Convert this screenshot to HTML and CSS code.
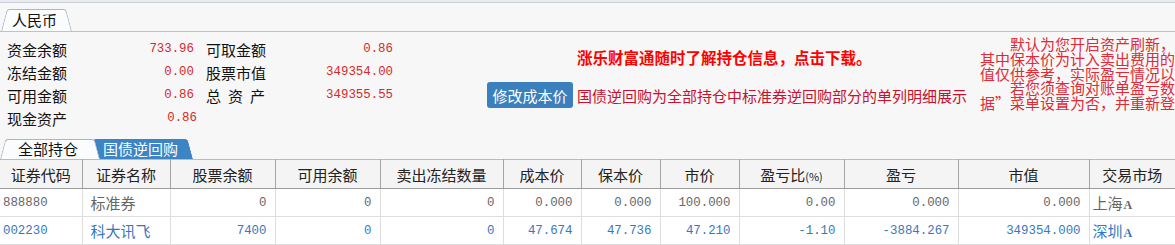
FILE: index.html
```html
<!DOCTYPE html>
<html lang="zh-CN">
<head>
  <meta charset="UTF-8">
  <title>资金持仓</title>
  <link rel="stylesheet" href="styles.css">
</head>
<body>
  <div class="topbar"></div>
  <div class="tabstrip">
    <div class="tab tab-money">人民币</div>
  </div>

  <div class="summary">
    <div class="funds">
      <span class="lbl">资金余额</span><span class="num">733.96</span>
      <span class="lbl lbl2">可取金额</span><span class="num">0.86</span>
      <span class="lbl">冻结金额</span><span class="num">0.00</span>
      <span class="lbl lbl2">股票市值</span><span class="num">349354.00</span>
      <span class="lbl">可用金额</span><span class="num">0.86</span>
      <span class="lbl lbl2 spaced">总资产</span><span class="num">349355.55</span>
      <span class="lbl">现金资产</span><span class="num num-shift">0.86</span>
    </div>

    <div class="notice">
      <p class="promo">涨乐财富通随时了解持仓信息，点击下载。</p>
      <div class="notice-row">
        <button class="btn">修改成本价</button>
        <span class="hint">国债逆回购为全部持仓中标准券逆回购部分的单列明细展示</span>
      </div>
    </div>

    <!-- 右侧提示文字，超出部分被裁掉 -->
    <div class="tips">
      <p class="ind">默认为您开启资产刷新，若</p>
      <p>其中保本价为计入卖出费用的成</p>
      <p>值仅供参考，实际盈亏情况以对</p>
      <p class="ind">若您须查询对账单盈亏数据</p>
      <p>据”菜单设置为否，并重新登录</p>
    </div>
  </div>

  <div class="tabstrip tabstrip-pos">
    <div class="tab tab-all">全部持仓</div>
    <div class="tab tab-active">国债逆回购</div>
  </div>

  <table class="grid">
    <colgroup>
      <col style="width:82px"><col style="width:88px"><col style="width:105px"><col style="width:105px">
      <col style="width:123px"><col style="width:78px"><col style="width:79px"><col style="width:79px">
      <col style="width:105px"><col style="width:114px"><col style="width:131px"><col style="width:86px">
    </colgroup>
    <thead>
      <tr>
        <th>证券代码</th>
        <th>证券名称</th>
        <th>股票余额</th>
        <th>可用余额</th>
        <th>卖出冻结数量</th>
        <th>成本价</th>
        <th>保本价</th>
        <th>市价</th>
        <th>盈亏比<span class="pct">(%)</span></th>
        <th>盈亏</th>
        <th>市值</th>
        <th>交易市场</th>
      </tr>
    </thead>
    <tbody>
      <tr class="row-gray">
        <td class="code">888880</td>
        <td class="name">标准券</td>
        <td class="n">0</td>
        <td class="n">0</td>
        <td class="n">0</td>
        <td class="n">0.000</td>
        <td class="n">0.000</td>
        <td class="n">100.000</td>
        <td class="n">0.00</td>
        <td class="n">0.000</td>
        <td class="n">0.000</td>
        <td class="mkt">上海<b>A</b></td>
      </tr>
      <tr class="row-blue">
        <td class="code">002230</td>
        <td class="name">科大讯飞</td>
        <td class="n">7400</td>
        <td class="n">0</td>
        <td class="n">0</td>
        <td class="n">47.674</td>
        <td class="n">47.736</td>
        <td class="n">47.210</td>
        <td class="n">-1.10</td>
        <td class="n">-3884.267</td>
        <td class="n">349354.000</td>
        <td class="mkt">深圳<b>A</b></td>
      </tr>
    </tbody>
  </table>
</body>
</html>
```

FILE: styles.css
```css
/* 页面基础 */
body {
  margin: 0;
  background-color: #f7f7f7;
  font-family: "Noto Sans CJK SC", sans-serif;
  font-size: 15px;
  color: #111;
  overflow: hidden;
}

p {
  margin: 0;
}

.topbar {
  height: 2px;
  background-color: #ebebeb;
  border-bottom: 1px solid #c6cfd9;
}

/* 页签 */
.tabstrip {
  display: flex;
  align-items: flex-end;
  height: 28px;
  border-bottom: 1px solid #b7c4d2;
}

.tab {
  position: relative;
  z-index: 0;
  height: 22px;
  line-height: 22px;
  font-size: 15px;
}

.tab::before,
.tab::after {
  content: "";
  position: absolute;
  top: 0;
  bottom: 0;
  width: 60%;
  z-index: -1;
  background-color: #fbfcfd;
  border-top: 1px solid #a9b6c4;
  transform-origin: bottom;
}

.tab::before {
  left: 0;
  border-left: 1px solid #a9b6c4;
  border-top-left-radius: 3px;
  transform: skewX(-15deg);
}

.tab::after {
  right: 0;
  border-right: 1px solid #a9b6c4;
  border-top-right-radius: 3px;
  transform: skewX(15deg);
}

.tab-money {
  margin-left: 1px;
  padding: 0 15px 0 11px;
}

.tabstrip-pos {
  height: 20px;
  margin-top: 9px;
  border-bottom: none;
}

.tab-all {
  z-index: 2;
  height: 20px;
  line-height: 20px;
  padding: 0 22px 0 18px;
}

.tab-active {
  z-index: 1;
  height: 20px;
  line-height: 20px;
  margin-left: -12px;
  padding: 0 15px 0 15px;
  color: #fff;
}

.tab-active::before,
.tab-active::after {
  background-color: #3d84c5;
  border-color: #3d84c5;
}

/* 资金汇总区 */
.summary {
  display: flex;
  height: 98px;
}

.funds {
  display: grid;
  grid-template-columns: 70px 117px 72px 127px;
  grid-auto-rows: 23px;
  align-content: start;
  width: 393px;
  padding: 6px 0 0 7px;
  line-height: 23px;
}

.lbl {
  white-space: nowrap;
}

.lbl2 {
  padding-left: 12px;
}

.spaced {
  letter-spacing: 7px;
}

.num {
  text-align: right;
  font-family: "Liberation Mono", monospace;
  font-size: 12.4px;
  color: #d42a2a;
}

.num-shift {
  padding-left: 3px;
  margin-right: -3px;
}

.notice {
  width: 493px;
  margin-left: 87px;
  padding-top: 14px;
}

.promo {
  padding-left: 90px;
  line-height: 22px;
  font-size: 15.5px;
  font-weight: bold;
  color: #f00;
}

.notice-row {
  display: flex;
  align-items: center;
  margin-top: 14px;
}

.btn {
  width: 86px;
  height: 26px;
  padding: 0;
  margin-right: 4px;
  border: none;
  border-radius: 3px;
  background-color: #3b7fbd;
  color: #fff;
  font-family: "Noto Sans CJK SC", sans-serif;
  font-size: 15px;
}

.hint {
  color: #c8102e;
  white-space: nowrap;
}

.tips {
  flex: 1;
  min-width: 0;
  overflow: hidden;
  padding-top: 5px;
  white-space: nowrap;
  line-height: 14.8px;
  color: #e02a35;
}

.tips .ind {
  text-indent: 30px;
}

/* 持仓表格 */
.grid {
  width: 1175px;
  table-layout: fixed;
  border-collapse: collapse;
}

.grid th {
  height: 28px;
  padding: 0;
  background-color: #f4f4f4;
  border-top: 1px solid #b3bdc8;
  border-bottom: 1px solid #9c9c9c;
  border-left: 1px solid #a3a3a3;
  border-right: 1px solid #a3a3a3;
  font-weight: normal;
  color: #222;
  white-space: nowrap;
}

.grid th .pct {
  font-size: 11px;
}

.grid td {
  height: 27px;
  padding: 0;
  background-color: #fff;
  border: 1px solid #dedede;
  white-space: nowrap;
}

.grid th:first-child,
.grid td:first-child {
  border-left: none;
}

.grid th:last-child,
.grid td:last-child {
  border-right: none;
}

.grid .n,
.grid .code {
  font-family: "Liberation Mono", monospace;
  font-size: 12.4px;
}

.grid .n {
  text-align: right;
  padding-right: 8px;
}

.grid .code {
  padding-left: 3px;
}

.grid .name {
  padding-left: 8px;
}

.grid .mkt {
  padding-left: 3px;
}

.grid .mkt b {
  font-family: "Liberation Serif", serif;
  font-size: 12px;
  margin-left: 1px;
}

.row-gray td {
  color: #666;
}

.row-blue td {
  color: #3678bd;
}
```
